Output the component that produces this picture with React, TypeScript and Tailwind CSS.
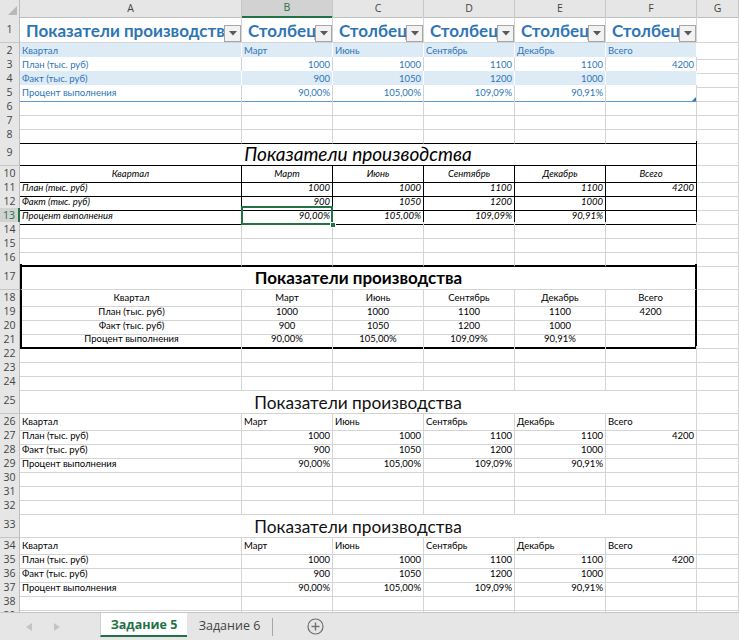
import React from "react";

const GRID = "grid grid-cols-[20px_222px_91px_91px_91px_91px_91px_42px]";
const months = ["Март", "Июнь", "Сентябрь", "Декабрь", "Всего"];
const plan = ["1000", "1000", "1100", "1100", "4200"];
const fact = ["900", "1050", "1200", "1000", ""];
const pct = ["90,00%", "105,00%", "109,09%", "90,91%", ""];
const labels = ["План (тыс. руб)", "Факт (тыс. руб)", "Процент выполнения"];

const GC = "border-r border-b border-r-[#d4d4d4] border-b-[#d4d4d4]";

function RowHead({ n, active }: { n: number; active?: boolean }) {
  return active ? (
    <div className="flex items-center justify-center bg-[#d2d2d2] border-b border-b-[#c6c6c6] border-r-2 border-r-[#217346] text-[10.5px] text-[#217346] font-['Open_Sans',sans-serif]">
      {n}
    </div>
  ) : (
    <div className="flex items-center justify-center bg-[#e6e6e6] border-r border-b border-r-[#bdbdbd] border-b-[#c6c6c6] text-[10.5px] text-[#444] font-['Open_Sans',sans-serif]">
      {n}
    </div>
  );
}

function Row({
  n,
  h,
  active,
  children,
}: {
  n: number;
  h?: string;
  active?: boolean;
  children: React.ReactNode;
}) {
  return (
    <div className={`${GRID} ${h ?? "h-[14px]"}`}>
      <RowHead n={n} active={active} />
      {children}
    </div>
  );
}

function Cell({ cls, children }: { cls: string; children?: React.ReactNode }) {
  return (
    <div className={`flex items-center overflow-hidden whitespace-nowrap px-[2px] ${cls}`}>
      {children}
    </div>
  );
}

function EmptyRow({ n, bottom }: { n: number; bottom?: string }) {
  const b = bottom ?? "border-b border-b-[#d4d4d4]";
  return (
    <Row n={n}>
      {[0, 1, 2, 3, 4, 5].map((i) => (
        <div key={i} className={`border-r border-r-[#d4d4d4] ${b}`} />
      ))}
      <div className={GC} />
    </Row>
  );
}

function Dropdown() {
  return (
    <div className="shrink-0 w-[17px] h-[17px] border border-[#a6a6a6] bg-[#f2f2f2] flex items-center justify-center">
      <svg width="8" height="5" viewBox="0 0 8 5">
        <polygon points="0,0 8,0 4,4.5" fill="#595959" />
      </svg>
    </div>
  );
}

function HeaderCell({ text }: { text: string }) {
  return (
    <div className="flex items-end border-r border-b border-r-[#d4d4d4] border-b-[#d4d4d4] pl-[6px] overflow-hidden">
      <span className="flex-1 min-w-0 overflow-hidden whitespace-nowrap font-bold text-[17px] leading-none pb-[3px] text-[#2e75b6]">
        {text}
      </span>
      <Dropdown />
    </div>
  );
}

function PlainTable({ start }: { start: number }) {
  const base = "border-r border-b border-r-[#d4d4d4] border-b-[#d4d4d4] text-[9.5px] text-black";
  return (
    <>
      <Row n={start} h="h-[26px]">
        <div className="col-span-6 flex items-end justify-center border-r border-b border-r-[#d4d4d4] border-b-[#d4d4d4] text-[17.3px] leading-none pb-[2px] text-[#111]">
          Показатели производства
        </div>
        <div className={GC} />
      </Row>
      <Row n={start + 1}>
        <Cell cls={base}>Квартал</Cell>
        {months.map((m) => (
          <Cell key={m} cls={base}>
            {m}
          </Cell>
        ))}
        <div className={GC} />
      </Row>
      {[plan, fact, pct].map((vals, r) => (
        <Row key={r} n={start + 2 + r}>
          <Cell cls={base}>{labels[r]}</Cell>
          {vals.map((v, i) => (
            <Cell key={i} cls={`${base} justify-end`}>
              {v}
            </Cell>
          ))}
          <div className={GC} />
        </Row>
      ))}
    </>
  );
}

export default function App() {
  const blue = "bg-[#ddebf7] border-r border-b border-r-white border-b-[#ddebf7] text-[#2e75b6] text-[9.5px]";
  const white = "bg-white border-r border-b border-r-[#d4d4d4] border-b-white text-[#2e75b6] text-[9.5px]";
  const white5 = "bg-white border-r border-b border-r-[#d4d4d4] border-b-[#5b9bd5] text-[#2e75b6] text-[9.5px]";
  const t2 = "border-r border-b border-r-black border-b-black italic text-[9.5px] text-black";
  const t3 = "border-r border-b border-r-[#d4d4d4] border-b-[#d4d4d4] justify-center text-[9.5px] text-black";

  return (
    <div className="w-[739px] h-[640px] flex flex-col bg-white overflow-hidden font-['Lato',sans-serif]">
      <div className="flex-1 min-h-0 overflow-hidden">
        {/* column headers */}
        <div className={`${GRID} h-[17px]`}>
          <div className="flex items-end justify-end p-[2px] bg-[#e6e6e6] border-r border-b border-r-[#bdbdbd] border-b-[#bdbdbd]">
            <svg width="9" height="9" viewBox="0 0 9 9">
              <polygon points="9,0 9,9 0,9" fill="#b8b8b8" />
            </svg>
          </div>
          {["A", "B", "C", "D", "E", "F", "G"].map((l) =>
            l === "B" ? (
              <div
                key={l}
                className="flex items-center justify-center bg-[#d2d2d2] border-r border-r-[#c6c6c6] border-b-2 border-b-[#217346] text-[10.5px] text-[#217346] font-['Open_Sans',sans-serif]"
              >
                {l}
              </div>
            ) : (
              <div
                key={l}
                className="flex items-center justify-center bg-[#e6e6e6] border-r border-b border-r-[#c6c6c6] border-b-[#bdbdbd] text-[10.5px] text-[#444] font-['Open_Sans',sans-serif]"
              >
                {l}
              </div>
            )
          )}
        </div>

        {/* Table 1 */}
        <Row n={1} h="h-[26px]">
          <HeaderCell text="Показатели производства" />
          {[1, 2, 3, 4, 5].map((i) => (
            <HeaderCell key={i} text={`Столбец${i}`} />
          ))}
          <div className={GC} />
        </Row>
        <Row n={2}>
          <Cell cls={blue}>Квартал</Cell>
          {months.map((m) => (
            <Cell key={m} cls={blue}>
              {m}
            </Cell>
          ))}
          <div className={GC} />
        </Row>
        <Row n={3}>
          <Cell cls={white}>{labels[0]}</Cell>
          {plan.map((v, i) => (
            <Cell key={i} cls={`${white} justify-end`}>
              {v}
            </Cell>
          ))}
          <div className={GC} />
        </Row>
        <Row n={4}>
          <Cell cls={blue}>{labels[1]}</Cell>
          {fact.map((v, i) => (
            <Cell key={i} cls={`${blue} justify-end`}>
              {v}
            </Cell>
          ))}
          <div className={GC} />
        </Row>
        <Row n={5}>
          <Cell cls={white5}>{labels[2]}</Cell>
          {pct.map((v, i) =>
            i === 4 ? (
              <div key={i} className={`relative ${white5}`}>
                <svg className="absolute right-0 bottom-0" width="4" height="4" viewBox="0 0 4 4">
                  <polygon points="4,0 4,4 0,4" fill="#2e75b6" />
                </svg>
              </div>
            ) : (
              <Cell key={i} cls={`${white5} justify-end`}>
                {v}
              </Cell>
            )
          )}
          <div className={GC} />
        </Row>
        <EmptyRow n={6} />
        <EmptyRow n={7} />
        <EmptyRow n={8} bottom="border-b border-b-black" />

        {/* Table 2 */}
        <Row n={9} h="h-[25px]">
          <div className="col-span-6 flex items-end justify-center border-r border-b border-r-black border-b-black italic text-[19px] leading-none pb-[2px] text-black">
            Показатели производства
          </div>
          <div className={GC} />
        </Row>
        <Row n={10}>
          <Cell cls={`${t2} justify-center`}>Квартал</Cell>
          {months.map((m) => (
            <Cell key={m} cls={`${t2} justify-center`}>
              {m}
            </Cell>
          ))}
          <div className={GC} />
        </Row>
        {[plan, fact, pct].map((vals, r) => (
          <Row key={r} n={11 + r} active={r === 2}>
            <Cell cls={t2}>{labels[r]}</Cell>
            {vals.map((v, i) =>
              r === 2 && i === 0 ? (
                <div key={i} className={`relative flex items-center justify-end px-[2px] ${t2}`}>
                  {v}
                  <div className="absolute -left-[1px] -top-[2px] -right-[1px] -bottom-[1px] border-2 border-[#217346]" />
                  <div className="absolute -right-[4px] -bottom-[4px] w-[6px] h-[6px] bg-[#217346] border border-white" />
                </div>
              ) : (
                <Cell key={i} cls={`${t2} justify-end`}>
                  {v}
                </Cell>
              )
            )}
            <div className={GC} />
          </Row>
        ))}
        <EmptyRow n={14} />
        <EmptyRow n={15} />
        <EmptyRow n={16} bottom="border-b-2 border-b-black" />

        {/* Table 3 */}
        <Row n={17} h="h-[26px]">
          <div className="col-span-6 flex items-end justify-center border-l-2 border-r-2 border-b border-l-black border-r-black border-b-[#d4d4d4] font-bold text-[17px] leading-none pb-[3px] text-black">
            Показатели производства
          </div>
          <div className={GC} />
        </Row>
        {[
          ["Квартал", ...months],
          [labels[0], ...plan],
          [labels[1], ...fact],
          [labels[2], ...pct],
        ].map((vals, r) => (
          <Row key={r} n={18 + r}>
            {vals.map((v, i) => {
              const left = i === 0 ? "border-l-2 border-l-black" : "";
              const right = i === 5 ? "border-r-2 border-r-black" : "";
              const bot = r === 3 ? "border-b-2 border-b-black" : "";
              return (
                <Cell key={i} cls={`${t3} ${left} ${right} ${bot}`}>
                  {v}
                </Cell>
              );
            })}
            <div className={GC} />
          </Row>
        ))}
        <EmptyRow n={22} />
        <EmptyRow n={23} />
        <EmptyRow n={24} />

        {/* Table 4 */}
        <PlainTable start={25} />
        <EmptyRow n={30} />
        <EmptyRow n={31} />
        <EmptyRow n={32} />

        {/* Table 5 */}
        <PlainTable start={33} />
        <EmptyRow n={38} />
        <EmptyRow n={39} />
      </div>

      {/* Sheet tabs */}
      <div className="h-[28px] shrink-0 flex items-stretch bg-[#e6e6e6] border-t border-t-[#c6c6c6] font-['Open_Sans',sans-serif]">
        <div className="w-[100px] flex items-center pl-[26px] gap-[22px]">
          <svg width="6" height="8" viewBox="0 0 6 8">
            <polygon points="6,0 6,8 0,4" fill="#c4c4c4" />
          </svg>
          <svg width="6" height="8" viewBox="0 0 6 8">
            <polygon points="0,0 0,8 6,4" fill="#c4c4c4" />
          </svg>
        </div>
        <div className="w-[87px] mb-[3px] pt-[2px] flex items-center justify-center bg-white border-l border-l-[#d0d0d0] border-b-2 border-b-[#217346] text-[12.5px] font-bold text-[#217346]">
          Задание 5
        </div>
        <div className="w-[86px] flex items-center justify-center text-[12.5px] text-[#444]">
          <span className="flex-1 text-center">Задание 6</span>
          <div className="w-px h-[18px] bg-[#a6a6a6]" />
        </div>
        <div className="flex items-center pl-[34px]">
          <svg width="17" height="17" viewBox="0 0 17 17">
            <circle cx="8.5" cy="8.5" r="7.5" fill="none" stroke="#6f6f6f" strokeWidth="1.2" />
            <line x1="8.5" y1="4.5" x2="8.5" y2="12.5" stroke="#6f6f6f" strokeWidth="1.4" />
            <line x1="4.5" y1="8.5" x2="12.5" y2="8.5" stroke="#6f6f6f" strokeWidth="1.4" />
          </svg>
        </div>
      </div>
    </div>
  );
}
